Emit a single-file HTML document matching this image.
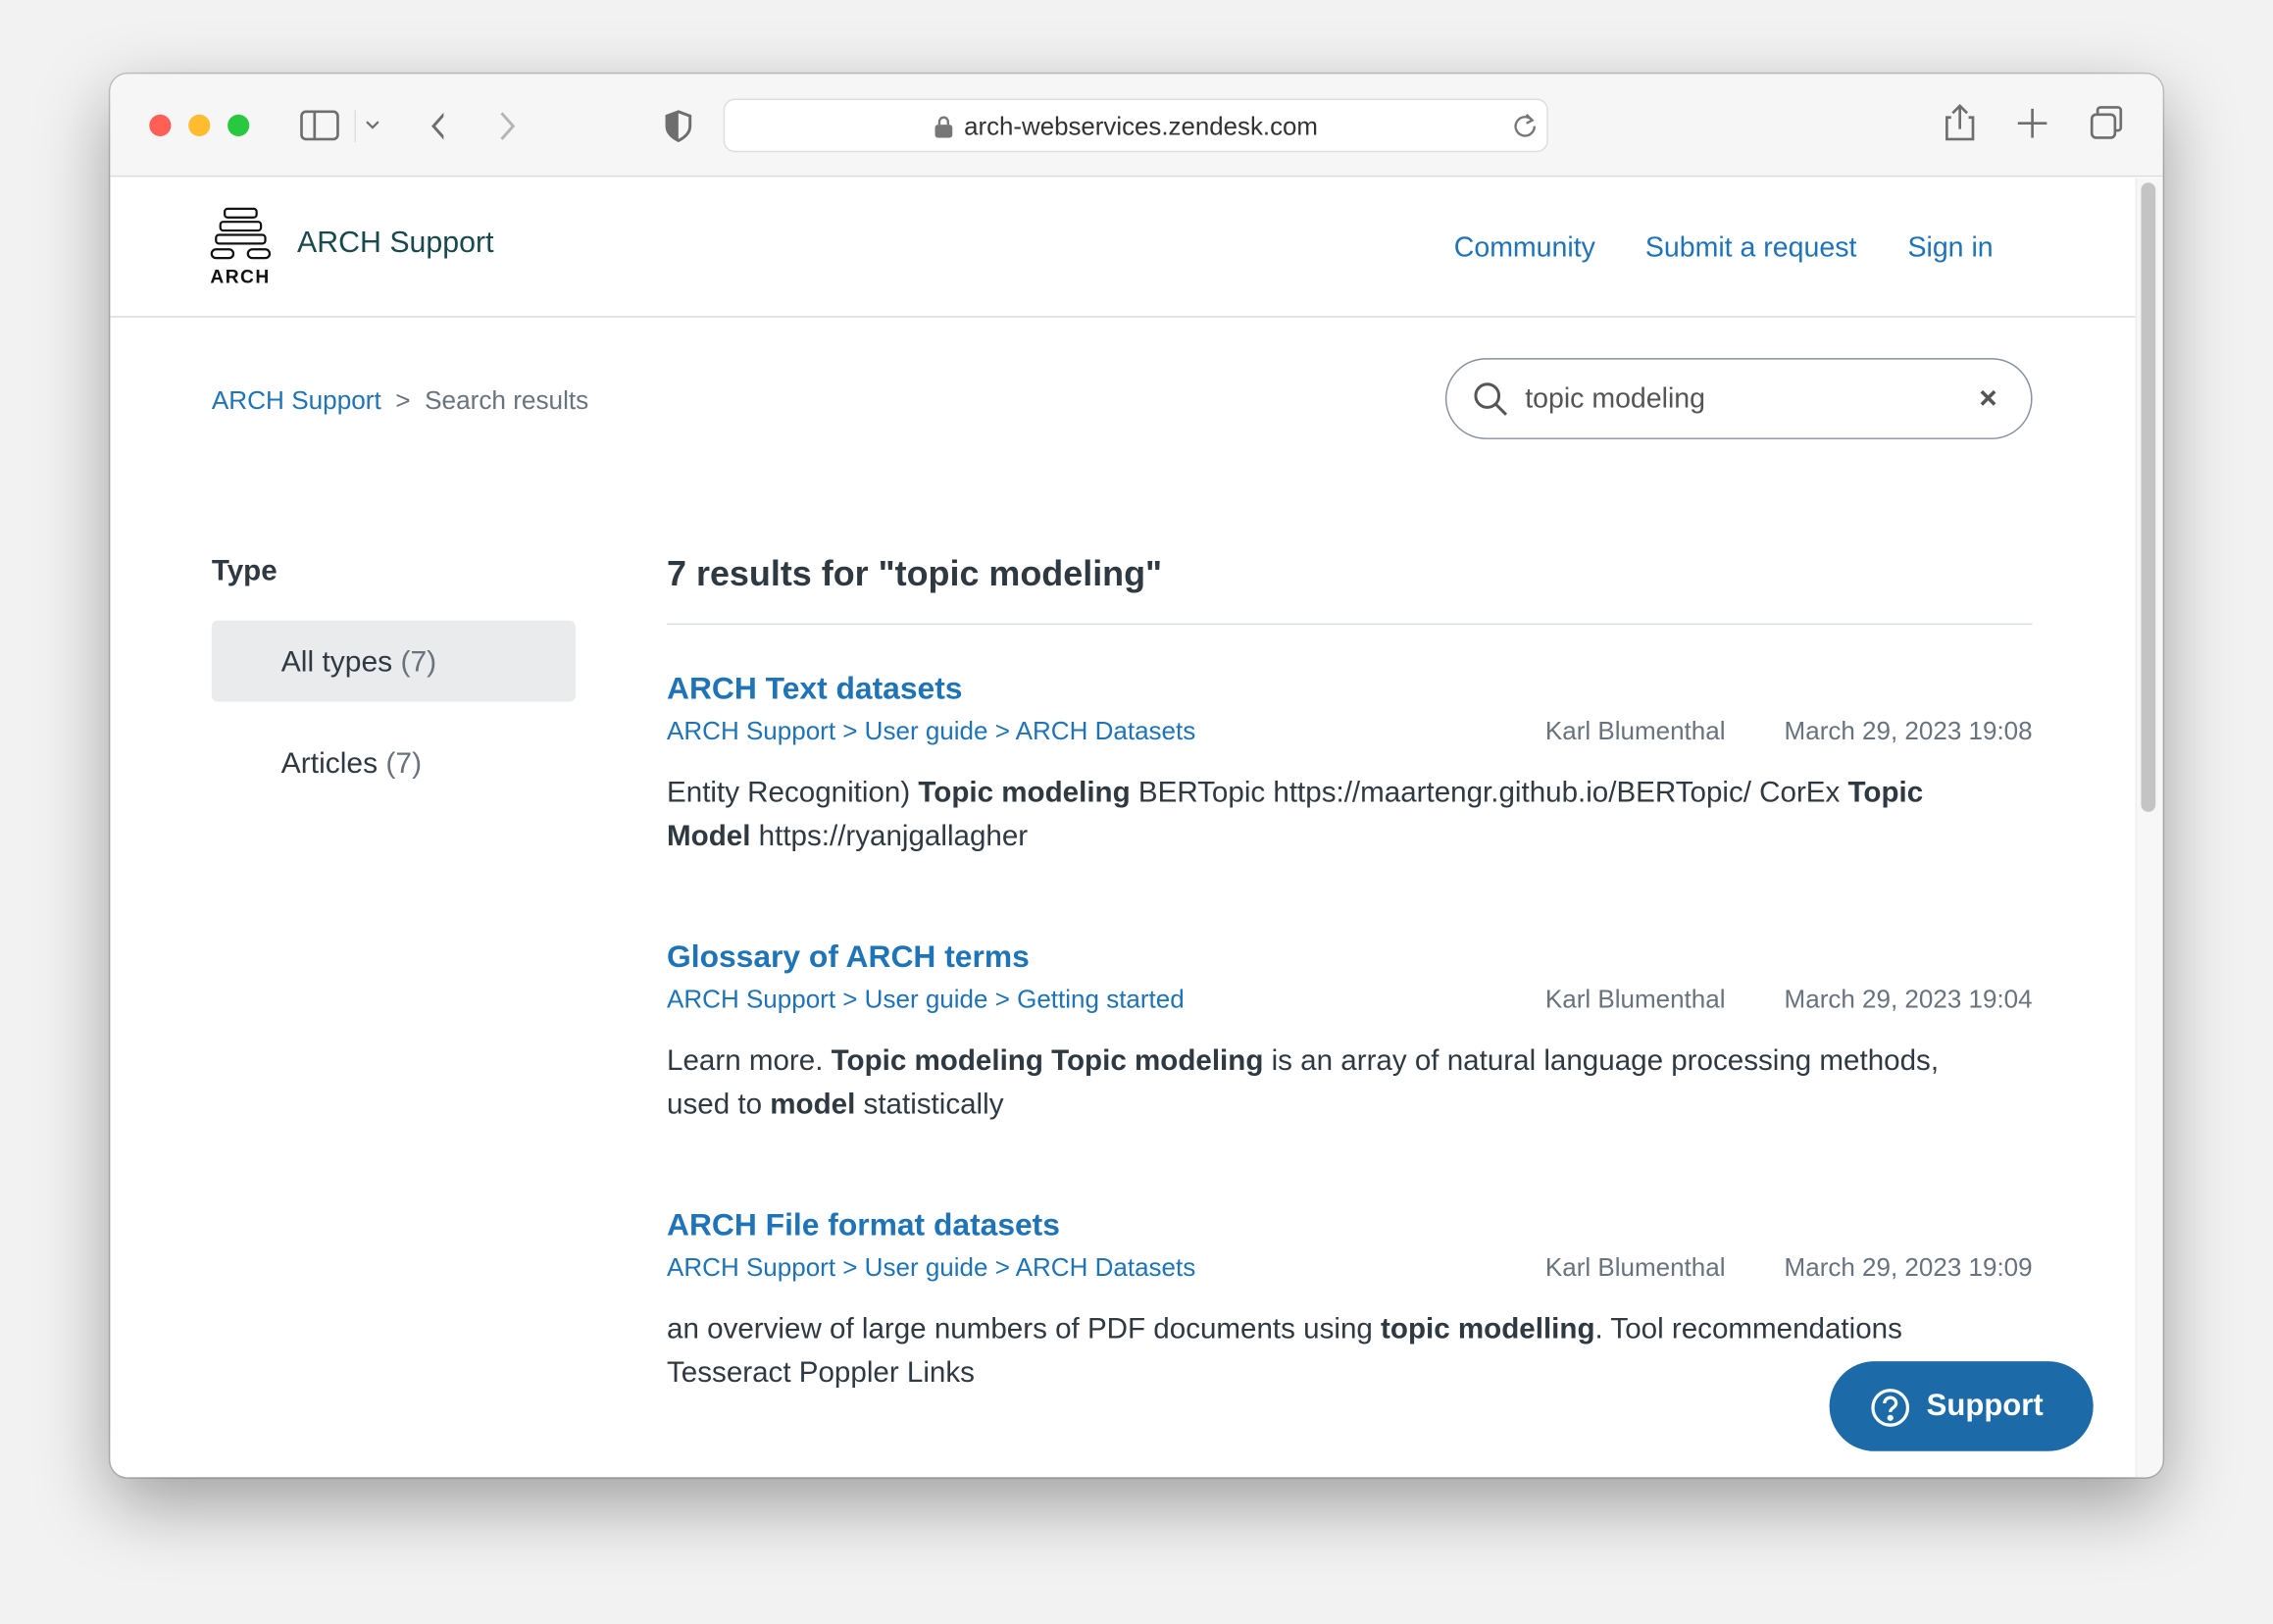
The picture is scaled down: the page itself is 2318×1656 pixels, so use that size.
<!DOCTYPE html>
<html><head><meta charset="utf-8"><style>
*{margin:0;padding:0;box-sizing:border-box}
html,body{width:2318px;height:1656px;overflow:hidden;background:#f2f2f2;font-family:"Liberation Sans",sans-serif}
#s{position:absolute;left:0;top:0;width:1568px;height:1120px;transform:scale(1.47832);transform-origin:0 0;background:#f2f2f2}
.a{position:absolute;white-space:nowrap}
.win{position:absolute;left:76px;top:51px;width:1416px;height:968px;border-radius:12px;background:#fff;box-shadow:0 18px 50px rgba(0,0,0,.35),0 0 0 1px rgba(0,0,0,.18);overflow:hidden}
.tb{position:absolute;left:0;top:0;width:1416px;height:71px;background:#f6f6f6;border-bottom:1px solid #dcdcdc}
.dot{position:absolute;width:15px;height:15px;border-radius:50%;top:28px}
.blue{color:#1f73b7}
.dk{color:#2f3941}
.t{font-weight:bold;font-size:21.5px;color:#1f73b7}
.bc{font-size:17.6px;color:#1f73b7}
.meta{font-size:17.6px;color:#68737d}
.sn{font-size:20px;color:#2f3941;line-height:30px;width:915px;white-space:normal}
</style></head><body><div id="s">
<div class="win">
 <div class="tb">
  <div class="dot" style="left:27px;background:#fe5f57"></div>
  <div class="dot" style="left:54px;background:#febc2e"></div>
  <div class="dot" style="left:81px;background:#28c840"></div>
  <svg class="a" style="left:130px;top:24px" width="100" height="24" viewBox="0 0 100 24" fill="none" stroke="#6e6e6e" stroke-width="1.8"><rect x="2" y="2" width="25" height="19" rx="3"/><line x1="11" y1="2" x2="11" y2="21"/><path d="M47 9l4 4 4-4" stroke-width="1.5"/><line x1="39" y1="1" x2="39" y2="23" stroke="#ddd" stroke-width="1"/><path d="M101 3l-8 9 8 9" stroke-width="2"/></svg>
  <svg class="a" style="left:265px;top:25px" width="20" height="22" fill="none" stroke="#b5b5b5" stroke-width="2"><path d="M5 2l8 9-8 9"/></svg>
  <svg class="a" style="left:381px;top:24px" width="22" height="24"><path d="M11 2L3 5v7c0 5 4 8 8 10 4-2 8-5 8-10V5z" fill="none" stroke="#6e6e6e" stroke-width="2"/><path d="M11 2v20c-4-2-8-5-8-10V5z" fill="#6e6e6e"/></svg>
  <div class="a" style="left:423px;top:17px;width:569px;height:37px;border:1px solid #dedede;border-radius:8px;background:#fff"></div>
  <svg class="a" style="left:568px;top:28px" width="14" height="16"><rect x="1" y="7" width="12" height="9" rx="2" fill="#777"/><path d="M4 7V5a3 3 0 016 0v2" fill="none" stroke="#777" stroke-width="1.6"/></svg>
  <div class="a dk" style="left:589px;top:26px;font-size:17.5px;color:#333">arch-webservices.zendesk.com</div>
  <svg class="a" style="left:967px;top:26px" width="18" height="18" fill="none" stroke="#777" stroke-width="1.6"><path d="M14 6A6.5 6.5 0 1015.5 10"/><path d="M10 2l4 4-4 2"/></svg>
  <svg class="a" style="left:1264px;top:20px" width="160" height="28" fill="none" stroke="#6e6e6e" stroke-width="1.8"><path d="M6 10H3v15h18V10h-3M12 18V2M7 7l5-5 5 5"/><path d="M62 4v20M52 14h20"/><rect x="103" y="8" width="16" height="16" rx="3"/><path d="M107 8V5a2 2 0 012-2h12a2 2 0 012 2v12a2 2 0 01-2 2h-2"/></svg>
 </div>
 <div class="a" style="left:0;top:167px;width:1397px;height:1px;background:#d8dcde"></div>
 <div class="a" style="left:1397px;top:72px;width:19px;height:896px;background:#f7f7f7;border-left:1px solid #eee"></div>
 <div class="a" style="left:1401px;top:75px;width:10px;height:434px;background:#c4c4c4;border-radius:5px"></div>
</div>
<svg class="a" style="left:143px;top:142px" width="46" height="56" fill="none" stroke="#111" stroke-width="1.5"><rect x="12" y="2" width="22" height="6" rx="2"/><rect x="9" y="11" width="28" height="6" rx="2"/><rect x="6" y="20" width="34" height="6" rx="2"/><rect x="3" y="30" width="15" height="6" rx="3"/><rect x="28" y="30" width="15" height="6" rx="3"/><text x="2" y="53" font-family="Liberation Sans" font-weight="bold" font-size="13" fill="#111" stroke="none" letter-spacing="1">ARCH</text></svg>
<div class="a" style="left:205px;top:156px;font-size:20.5px;color:#17494d">ARCH Support</div>
<div class="a blue" style="left:1003px;top:161px;font-size:19.3px">Community</div>
<div class="a blue" style="left:1135px;top:161px;font-size:19.3px">Submit a request</div>
<div class="a blue" style="left:1316px;top:161px;font-size:19.3px">Sign in</div>
<div class="a" style="left:146px;top:266px;font-size:17.7px"><span class="blue">ARCH Support</span><span style="color:#68737d">&nbsp;&nbsp;&gt;&nbsp;&nbsp;Search results</span></div>
<div class="a" style="left:997px;top:247px;width:405px;height:56px;border:1px solid #87929d;border-radius:28px"></div>
<svg class="a" style="left:1015px;top:262px" width="26" height="26" fill="none" stroke="#555" stroke-width="2"><circle cx="11" cy="11" r="8"/><path d="M17 17l7 7"/></svg>
<div class="a" style="left:1052px;top:265px;font-size:19.3px;color:#555">topic modeling</div>
<svg class="a" style="left:1365px;top:268px" width="13" height="13" stroke="#555" stroke-width="2.4"><path d="M2 2l9 9M11 2l-9 9"/></svg>
<div class="a dk" style="left:146px;top:383px;font-size:20px;font-weight:bold">Type</div>
<div class="a" style="left:146px;top:428px;width:251px;height:56px;background:#e9ebed;border-radius:4px"></div>
<div class="a dk" style="left:194px;top:446px;font-size:20.3px">All types <span style="color:#68737d">(7)</span></div>
<div class="a dk" style="left:194px;top:516px;font-size:20.3px">Articles <span style="color:#68737d">(7)</span></div>
<div class="a dk" style="left:460px;top:383px;font-size:24.3px;font-weight:bold">7 results for "topic modeling"</div>
<div class="a" style="left:460px;top:430px;width:942px;height:1px;background:#d8dcde"></div>

<div class="a t" style="left:460px;top:463px">ARCH Text datasets</div>
<div class="a bc" style="left:460px;top:494px">ARCH Support &gt; User guide &gt; ARCH Datasets</div>
<div class="a meta" style="left:1066px;top:494px">Karl Blumenthal</div>
<div class="a meta" style="right:166px;top:494px">March 29, 2023 19:08</div>
<div class="a sn" style="left:460px;top:532px">Entity Recognition) <b>Topic modeling</b> BERTopic https://maartengr.github.io/BERTopic/ CorEx <b>Topic Model</b> https://ryanjgallagher</div>

<div class="a t" style="left:460px;top:648px">Glossary of ARCH terms</div>
<div class="a bc" style="left:460px;top:679px">ARCH Support &gt; User guide &gt; Getting started</div>
<div class="a meta" style="left:1066px;top:679px">Karl Blumenthal</div>
<div class="a meta" style="right:166px;top:679px">March 29, 2023 19:04</div>
<div class="a sn" style="left:460px;top:717px">Learn more. <b>Topic modeling Topic modeling</b> is an array of natural language processing methods, used to <b>model</b> statistically</div>

<div class="a t" style="left:460px;top:833px">ARCH File format datasets</div>
<div class="a bc" style="left:460px;top:864px">ARCH Support &gt; User guide &gt; ARCH Datasets</div>
<div class="a meta" style="left:1066px;top:864px">Karl Blumenthal</div>
<div class="a meta" style="right:166px;top:864px">March 29, 2023 19:09</div>
<div class="a sn" style="left:460px;top:902px">an overview of large numbers of PDF documents using <b>topic modelling</b>. Tool recommendations Tesseract Poppler Links</div>

<div class="a" style="left:1262px;top:939px;width:182px;height:62px;background:#1c6aa8;border-radius:31px"></div>
<svg class="a" style="left:1289px;top:956px" width="30" height="30" fill="none" stroke="#fff" stroke-width="2.2"><circle cx="15" cy="15" r="12"/><path d="M11 12a4 4 0 118 0c0 3-4 3-4 6"/><circle cx="15" cy="22" r="1" fill="#fff"/></svg>
<div class="a" style="left:1329px;top:958px;font-size:21px;font-weight:bold;color:#fff">Support</div>
</div>
</body></html>
